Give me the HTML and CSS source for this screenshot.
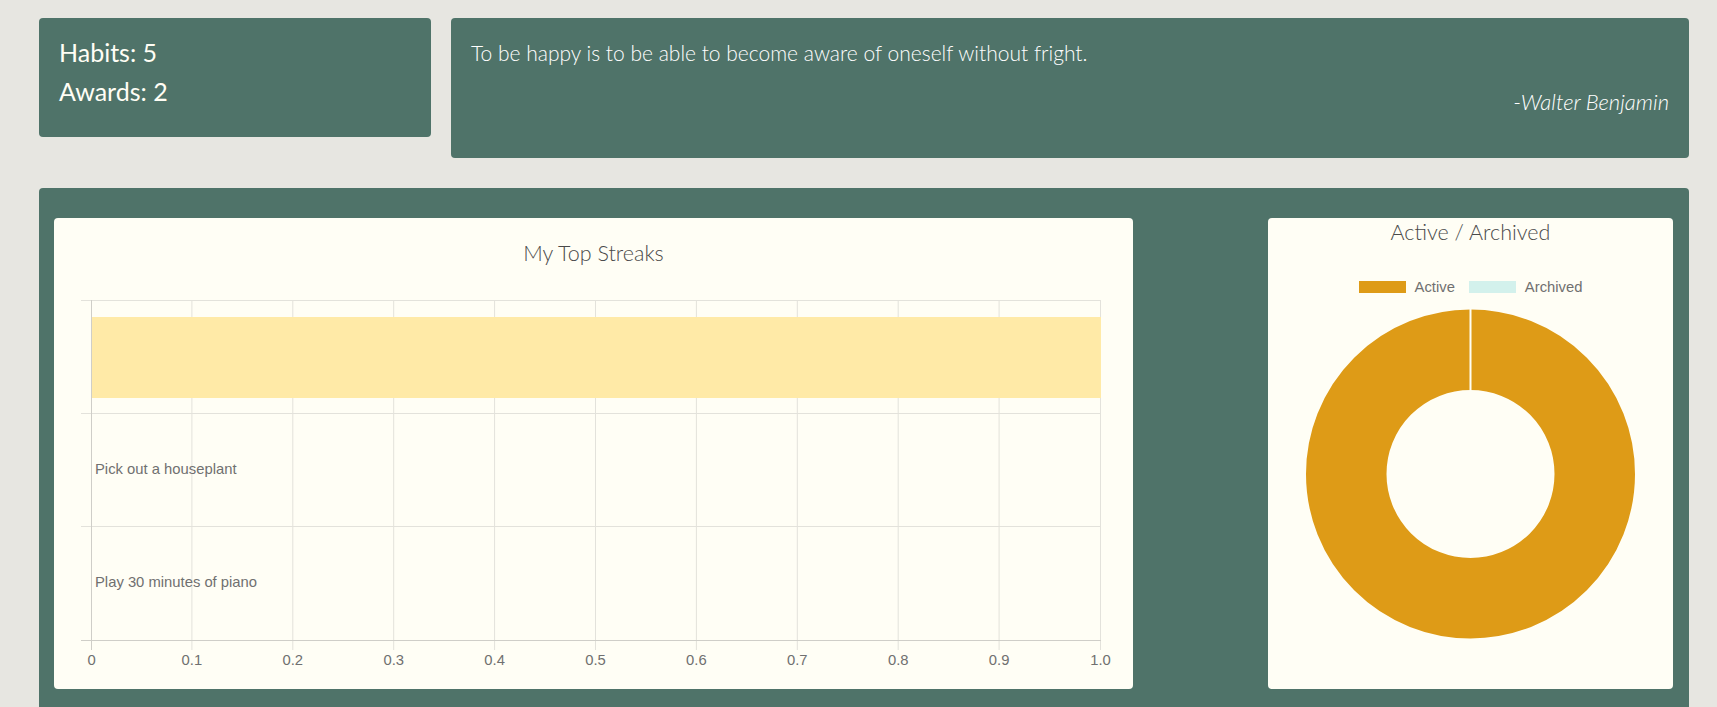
FILE: index.html
```html
<!DOCTYPE html>
<html lang="en">
<head>
<meta charset="utf-8">
<title>Dashboard</title>
<link rel="stylesheet" href="styles.css">
</head>
<body>
<div class="page">
  <div class="top-row">
    <section class="stat-card">
      <div class="stat-line">Habits: 5</div>
      <div class="stat-line">Awards: 2</div>
    </section>
    <section class="quote-card">
      <p class="quote-text">To be happy is to be able to become aware of oneself without fright.</p>
      <p class="quote-author">-Walter Benjamin</p>
    </section>
  </div>

  <section class="main-panel">
    <div class="chart-card streaks">
      <h3 class="chart-title">My Top Streaks</h3>
      <svg class="bar-chart" width="1079" height="423" viewBox="0 48 1079 423">
        <g class="grid">
          <line x1="137.9" y1="82" x2="137.9" y2="432"/>
          <line x1="238.8" y1="82" x2="238.8" y2="432"/>
          <line x1="339.7" y1="82" x2="339.7" y2="432"/>
          <line x1="440.6" y1="82" x2="440.6" y2="432"/>
          <line x1="541.5" y1="82" x2="541.5" y2="432"/>
          <line x1="642.4" y1="82" x2="642.4" y2="432"/>
          <line x1="743.3" y1="82" x2="743.3" y2="432"/>
          <line x1="844.2" y1="82" x2="844.2" y2="432"/>
          <line x1="945.1" y1="82" x2="945.1" y2="432"/>
          <line x1="1046.5" y1="82" x2="1046.5" y2="432"/>
          <line x1="27" y1="82.5" x2="1046" y2="82.5"/>
          <line x1="27" y1="195.5" x2="1046" y2="195.5"/>
          <line x1="27" y1="308.5" x2="1046" y2="308.5"/>
        </g>
        <rect class="bar" x="37" y="99" width="1010" height="81"/>
        <g class="axis">
          <line x1="37.5" y1="82" x2="37.5" y2="432"/>
          <line x1="27" y1="422.5" x2="1047" y2="422.5"/>
        </g>
        <g class="tick-labels">
          <text x="37.5" y="443">0</text>
          <text x="137.9" y="443">0.1</text>
          <text x="238.8" y="443">0.2</text>
          <text x="339.7" y="443">0.3</text>
          <text x="440.6" y="443">0.4</text>
          <text x="541.5" y="443">0.5</text>
          <text x="642.4" y="443">0.6</text>
          <text x="743.3" y="443">0.7</text>
          <text x="844.2" y="443">0.8</text>
          <text x="945.1" y="443">0.9</text>
          <text x="1046.5" y="443">1.0</text>
        </g>
        <g class="cat-labels">
          <text x="41" y="252">Pick out a houseplant</text>
          <text x="41" y="365.5">Play 30 minutes of piano</text>
        </g>
      </svg>
    </div>

    <div class="chart-card donut">
      <h3 class="donut-title">Active / Archived</h3>
      <div class="legend">
        <span class="legend-item"><span class="swatch swatch-active"></span>Active</span>
        <span class="legend-item"><span class="swatch swatch-archived"></span>Archived</span>
      </div>
      <svg class="donut-chart" width="405" height="393" viewBox="0 78 405 393">
        <circle class="ring" cx="202.5" cy="257" r="124.25"/>
        <line class="divider" x1="202.5" y1="92" x2="202.5" y2="173.5"/>
      </svg>
    </div>
  </section>
</div>
</body>
</html>
```

FILE: styles.css
```css
* {
  box-sizing: border-box;
}

html, body {
  margin: 0;
  padding: 0;
}

body {
  background: #e7e6e1;
  font-family: Lato, "Open Sans", "Liberation Sans", sans-serif;
  color: #fffef5;
}

.page {
  padding: 18px 28px 0 39px;
}

.top-row {
  display: flex;
  align-items: flex-start;
  gap: 20px;
}

.stat-card {
  width: 392px;
  height: 119px;
  background: #4f7369;
  border-radius: 4px;
  padding: 15px 20px 0;
}

.stat-line {
  font-size: 25px;
  line-height: 39px;
  font-weight: 400;
  color: #fffef5;
}

.quote-card {
  flex: 1;
  height: 140px;
  background: #4f7369;
  border-radius: 4px;
  padding: 23px 20px 0;
}

.quote-text {
  margin: 0;
  font-size: 21px;
  line-height: 24px;
  font-weight: 300;
  color: #ffffff;
}

.quote-author {
  margin: 25px 0 0;
  font-size: 22px;
  line-height: 24px;
  font-weight: 300;
  font-style: italic;
  text-align: right;
  color: #ffffff;
}

.main-panel {
  margin-top: 30px;
  background: #4f7369;
  border-radius: 4px 4px 0 0;
  padding: 30px 16px 18px 15px;
  display: flex;
  justify-content: space-between;
  align-items: flex-start;
}

.chart-card {
  background: #fffef5;
  border-radius: 4px;
  height: 471px;
  overflow: hidden;
}

.streaks {
  width: 1079px;
}

.donut {
  width: 405px;
}

.chart-title {
  margin: 22px 0 0;
  font-size: 21.5px;
  line-height: 26px;
  font-weight: 300;
  color: #4a4a4a;
  text-align: center;
}

.bar-chart,
.donut-chart {
  display: block;
}

.grid line {
  stroke: #e3e2db;
  stroke-width: 1;
}

.axis line {
  stroke: #cfcec8;
  stroke-width: 1;
}

.bar {
  fill: #ffeaa7;
}

.tick-labels text {
  font-family: "Liberation Sans", Arial, sans-serif;
  font-size: 14.8px;
  fill: #707070;
  text-anchor: middle;
  dominant-baseline: middle;
}

.cat-labels text {
  font-family: "Liberation Sans", Arial, sans-serif;
  font-size: 14.8px;
  fill: #707070;
  dominant-baseline: middle;
}

.donut-title {
  margin: 2px 0 0;
  font-size: 21.5px;
  line-height: 24px;
  font-weight: 300;
  color: #4a4a4a;
  text-align: center;
}

.legend {
  margin-top: 35px;
  display: flex;
  justify-content: center;
  gap: 14px;
  font-family: "Liberation Sans", Arial, sans-serif;
  font-size: 14.8px;
  line-height: 16px;
  color: #707070;
}

.legend-item {
  display: flex;
  align-items: center;
  gap: 9px;
}

.swatch {
  display: inline-block;
  width: 47px;
  height: 12px;
}

.swatch-active {
  background: #de9b17;
}

.swatch-archived {
  background: #d3f1ec;
}

.ring {
  fill: none;
  stroke: #de9b17;
  stroke-width: 80.5;
}

.divider {
  stroke: #fffef5;
  stroke-width: 2;
}
```
